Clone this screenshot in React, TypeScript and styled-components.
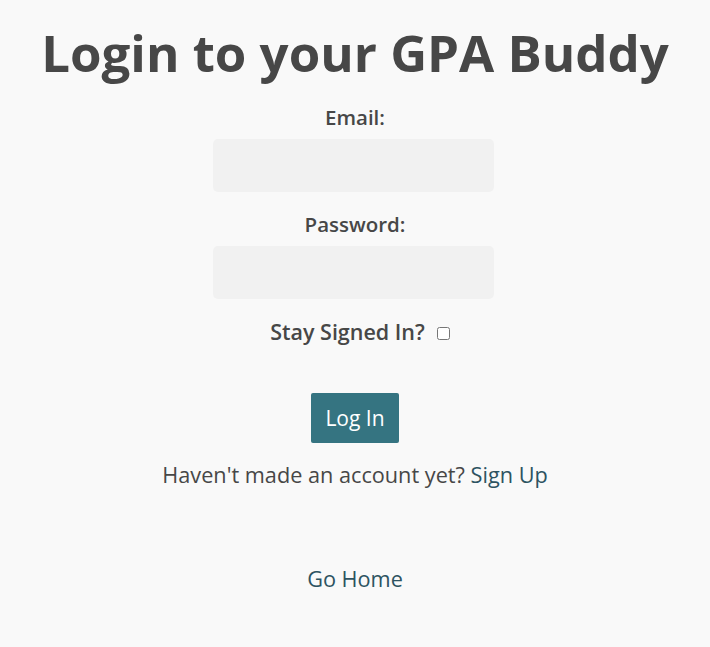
import React, { useState } from 'react'
import styled, { createGlobalStyle } from 'styled-components'

const GlobalStyle = createGlobalStyle`
body{
	margin:0;
	background:#f9f9f9;
	font-family:"Open Sans","Noto Sans",sans-serif;
	color:#474747;
}
`

const Page = styled.main`
display:flex;
flex-direction:column;
align-items:center;
padding-top:21px;
`
const Title = styled.h1`
margin:0;
font-size:51px;
line-height:62px;
font-weight:700;
color:#474747;
`
const Form = styled.form`
display:flex;
flex-direction:column;
align-items:center;
margin-top:20px;
`
const Label = styled.label<{ $first?: boolean }>`
margin-top:${p => (p.$first ? '0' : '18px')};
font-size:20.5px;
line-height:28px;
font-weight:600;
`
const Field = styled.input`
margin:8px 3px 0 0;
width:281px;
height:53px;
box-sizing:border-box;
border:none;
border-radius:5px;
background:#f1f1f1;
font-size:18px;
padding:0 12px;
outline:none;
`
const CheckRow = styled.div`
display:flex;
align-items:center;
gap:12px;
margin-top:19px;
padding-left:10px;
font-size:21.5px;
line-height:28px;
font-weight:600;
input{
	margin:2px 0 0 0;
	width:13px;
	height:13px;
}
`
const SubmitButton = styled.button`
margin-top:47px;
height:50px;
padding:0 14px;
border:none;
border-radius:2px;
background:#357481;
color:#ffffff;
font-family:inherit;
font-size:21px;
cursor:pointer;
`
const Prompt = styled.p`
margin:18px 0 0 0;
font-size:21.7px;
line-height:28px;
`
const TextLink = styled.a`
color:#2d5361;
text-decoration:none;
`
const HomeLink = styled(TextLink)`
margin-top:76px;
font-size:21.7px;
line-height:28px;
`

export default function App() {
	const [stay, setStay] = useState(false)
	return (
		<>
			<GlobalStyle />
			<Page>
				<Title>Login to your GPA Buddy</Title>
				<Form onSubmit={e => e.preventDefault()}>
					<Label $first htmlFor="email">Email:</Label>
					<Field id="email" type="email" />
					<Label htmlFor="password">Password:</Label>
					<Field id="password" type="password" />
					<CheckRow>
						<label htmlFor="stay">Stay Signed In?</label>
						<input id="stay" type="checkbox" checked={stay} onChange={e => setStay(e.target.checked)} />
					</CheckRow>
					<SubmitButton type="submit">Log In</SubmitButton>
				</Form>
				<Prompt>
					Haven't made an account yet? <TextLink href="#">Sign Up</TextLink>
				</Prompt>
				<HomeLink href="#">Go Home</HomeLink>
			</Page>
		</>
	)
}
